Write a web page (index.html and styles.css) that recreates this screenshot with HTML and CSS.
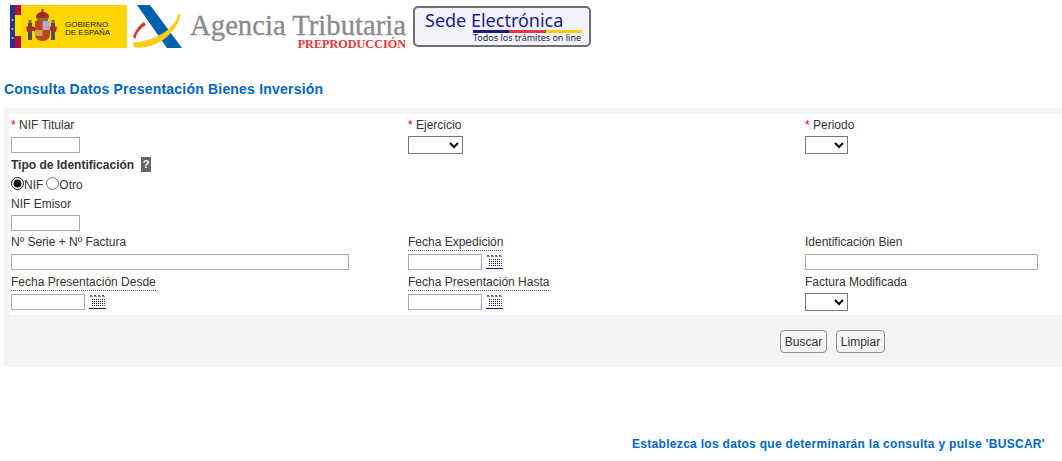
FILE: index.html
```html
<!DOCTYPE html>
<html lang="es">
<head>
  <meta charset="UTF-8">
  <meta name="viewport" content="width=device-width, initial-scale=1.0">
  <title>Consulta Datos Presentación Bienes Inversión</title>
  <link rel="stylesheet" href="styles.css">
</head>
<body>
  <svg width="0" height="0" class="defs">
    <defs>
      <g id="cal">
        <path d="M1 0.500h16" stroke="#55558c" stroke-dasharray="2 2"/>
        <path d="M1 1.500h16" stroke="#8a8aa8" stroke-dasharray="3 1"/>
        <path d="M3 4.500h11M3 6.500h11M3 8.500h11M3 10.500h11" stroke="#111" stroke-dasharray="1 1"/>
        <path d="M15.500 4v8" stroke="#c2185b" stroke-dasharray="1 1"/>
        <path d="M0 13.500h17" stroke="#14147a"/>
      </g>
    </defs>
  </svg>

  <header class="top">
    <svg class="logo-gob" width="117" height="43" viewBox="0 0 117 43">
      <rect width="117" height="43" fill="#ffd500"/>
      <rect width="5" height="43" fill="#2b2f8f"/>
      <rect x="5" width="6" height="43" fill="#b5123a"/>
      <rect x="5" y="10" width="6" height="21" fill="#ffe600"/>
      <circle cx="2.500" cy="15" r="1" fill="#ffd500"/>
      <circle cx="2.500" cy="24" r="1" fill="#ffd500"/>
      <circle cx="2.500" cy="33" r="1" fill="#ffd500"/>
      <path d="M18 18h4v17h-4zM41 18h4v17h-4z" fill="#4d5058"/>
      <path d="M18.500 15h3v3h-3zM41.500 15h3v3h-3z" fill="#8a6d1f"/>
      <path d="M16 22c4-2 7-1 10 1v4c-3-2-6-2-9 0zM47 22c-4-2-7-1-10 1v4c3-2 6-2 9 0z" fill="#b02a2a"/>
      <path d="M25 16h15v13c0 5-4 7-7.500 7s-7.500-2-7.500-7z" fill="#b8471f"/>
      <path d="M32.500 16h7.500v9h-7.500z" fill="#b9a6c4"/>
      <path d="M25 25h7.500v6h-7.500z" fill="#d2a24a"/>
      <path d="M26 12c0-3 3-5 6.500-5s6.500 2 6.500 5l-1 2H27z" fill="#a8282a"/>
      <path d="M27 13h11v3H27z" fill="#8a6d1f"/>
      <rect x="31.500" y="4" width="2" height="4" fill="#6b4a1a"/>
      <text x="55" y="22" class="gob-text">GOBIERNO</text>
      <text x="55" y="30" class="gob-text">DE ESPAÑA</text>
    </svg>

    <svg class="logo-aeat" width="51" height="43" viewBox="-1 0 51 43">
      <path d="M3 0h13l32 43H33z" fill="#0060ae"/>
      <path d="M45 9c-3 13-20 27-46 29l2 4c21 2 41-13 45-32z" fill="#ffcc1a" stroke="#ffcc1a"/>
      <path d="M10 17c-5 3-9 9-11 15l2.500 2c1-6 5-11 10.500-14z" fill="#d9383a"/>
    </svg>

    <div class="agencia">
      <span class="agencia-name">Agencia Tributaria</span>
      <span class="agencia-env">PREPRODUCCIÓN</span>
    </div>

    <div class="sede">
      <div class="sede-title">Sede <span class="sede-strong">Electrónica</span></div>
      <div class="sede-bar"><i class="b1"></i><i class="b2"></i><i class="b3"></i></div>
      <div class="sede-sub">Todos los trámites on line</div>
    </div>
  </header>

  <h1 class="page-title">Consulta Datos Presentación Bienes Inversión</h1>

  <form class="panel">
    <div class="fields">
      <div class="row">
        <div class="field">
          <label><span class="req">*</span> NIF Titular</label>
          <input type="text" class="w-nif">
        </div>
        <div class="field">
          <label><span class="req">*</span> Ejercicio</label>
          <select class="w-eje"><option></option></select>
        </div>
        <div class="field">
          <label><span class="req">*</span> Periodo</label>
          <select class="w-per"><option></option></select>
        </div>
      </div>

      <div class="tipo">
        <div class="tipo-label"><b>Tipo de Identificación</b><span class="help">?</span></div>
        <div class="radios">
          <input type="radio" name="tipo" checked><span>NIF</span>
          <input type="radio" name="tipo"><span>Otro</span>
        </div>
        <label class="emisor-label">NIF Emisor</label>
        <input type="text" class="w-nif">
      </div>

      <div class="row row-serie">
        <div class="field">
          <label>Nº Serie + Nº Factura</label>
          <input type="text" class="w-serie">
        </div>
        <div class="field">
          <label><span class="dotted">Fecha Expedición</span></label>
          <div class="date"><input type="text" class="w-date"><svg width="17" height="14"><use href="#cal"/></svg></div>
        </div>
        <div class="field">
          <label>Identificación Bien</label>
          <input type="text" class="w-bien">
        </div>
      </div>

      <div class="row row-pres">
        <div class="field">
          <label><span class="dotted">Fecha Presentación Desde</span></label>
          <div class="date"><input type="text" class="w-date"><svg width="17" height="14"><use href="#cal"/></svg></div>
        </div>
        <div class="field">
          <label><span class="dotted">Fecha Presentación Hasta</span></label>
          <div class="date"><input type="text" class="w-date"><svg width="17" height="14"><use href="#cal"/></svg></div>
        </div>
        <div class="field">
          <label>Factura Modificada</label>
          <select class="w-per"><option></option></select>
        </div>
      </div>
    </div>

    <div class="actions">
      <button type="button" class="btn">Buscar</button>
      <button type="button" class="btn">Limpiar</button>
    </div>
  </form>

  <p class="hint">Establezca los datos que determinarán la consulta y pulse 'BUSCAR'</p>
</body>
</html>
```

FILE: styles.css
```css
* {
  box-sizing: border-box;
}

body {
  margin: 0;
  font-family: "Liberation Sans", Arial, sans-serif;
  font-size: 12px;
  color: #333;
  overflow: hidden;
}

.defs {
  position: absolute;
}

/* cabecera */
.top {
  display: flex;
  align-items: flex-start;
  height: 48px;
  padding: 5px 0 0 10px;
}

.logo-gob {
  flex: none;
}

.logo-aeat {
  flex: none;
  margin-left: 6px;
}

.gob-text {
  font-family: "Liberation Sans", Arial, sans-serif;
  font-size: 8px;
  fill: #222;
}

.agencia {
  display: flex;
  flex-direction: column;
  align-items: flex-end;
  width: 216px;
  margin-left: 6px;
  font-family: "Liberation Serif", "Times New Roman", serif;
}

.agencia-name {
  font-size: 28.700px;
  line-height: 28px;
  margin-top: 6px;
  color: #8a8a8a;
  white-space: nowrap;
  -webkit-text-stroke: 0.3px #8a8a8a;
}

.agencia-env {
  font-size: 12.200px;
  font-weight: bold;
  line-height: 10px;
  color: #e8383a;
}

.sede {
  width: 178px;
  height: 41px;
  margin: 1px 0 0 7px;
  padding: 2px 0 0 10px;
  border: 2px solid #6f6f6f;
  border-radius: 5px;
  background: #f3f3fd;
  font-family: "Noto Sans", "Open Sans", sans-serif;
  color: #1a1a8c;
}

.sede-title {
  font-size: 18px;
  line-height: 20px;
  white-space: nowrap;
}

.sede-strong {
  color: #1a1a8c;
}

.sede-bar {
  display: flex;
  width: 109px;
  height: 3px;
  margin-left: 48px;
}

.sede-bar i {
  flex: 1;
}

.b1 { background: #1a1a8c; }
.b2 { background: #e0383e; }
.b3 { background: #ffcc1a; }

.sede-sub {
  margin-left: 48px;
  font-size: 9px;
  line-height: 10px;
  color: #22224f;
  white-space: nowrap;
}

.page-title {
  margin: 33px 0 0 4px;
  font-size: 14px;
  line-height: 16px;
  letter-spacing: 0.2px;
  color: #0066cc;
  font-weight: bold;
}

/* formulario */
.panel {
  margin: 11px 0 0 4px;
  padding-top: 6px;
  background: #f4f4f4;
  border-radius: 4px 0 0 4px;
}

.fields {
  margin-left: 5px;
  padding: 4px 0 4px 2px;
  background: #fff;
}

.row {
  display: grid;
  grid-template-columns: 397px 397px 1fr;
}

.field label,
.emisor-label,
.tipo-label {
  display: block;
  line-height: 14px;
}

.field label {
  margin-bottom: 5px;
}

.req {
  color: #e00000;
}

.dotted {
  border-bottom: 1px dotted #555;
  padding-bottom: 1px;
}

input[type="text"] {
  display: block;
  height: 16px;
  margin: 0;
  padding: 0 2px;
  border: 1px solid #aaa;
  border-radius: 0;
  background: #fff;
}

select {
  display: block;
  height: 18px;
  margin: -1px 0 0;
  font-size: 12px;
  border: 1px solid #767676;
  border-radius: 0;
  background: #fff;
}

.w-nif { width: 69px; }
.w-date { width: 74px; }
.w-serie { width: 338px; }
.w-bien { width: 233px; }
.w-eje { width: 55px; }
.w-per { width: 43px; }

.date {
  display: flex;
  align-items: center;
  gap: 4px;
}

.tipo {
  margin-top: 3px;
}

.tipo-label {
  display: flex;
  align-items: center;
}

.help {
  width: 10px;
  height: 15px;
  margin-left: 7px;
  background: #666;
  color: #fff;
  font-weight: bold;
  font-size: 11px;
  line-height: 15px;
  text-align: center;
}

.radios {
  display: flex;
  align-items: center;
  height: 22px;
}

.radios input {
  width: 13px;
  height: 13px;
  margin: 0;
  accent-color: #111;
}

.radios span {
  margin-top: 3px;
}

.radios span + input {
  margin-left: 3px;
}

.emisor-label {
  margin: 3px 0 4px;
}

.row-serie {
  margin-top: 4px;
}

.row-pres {
  margin-top: 5px;
}

.actions {
  display: flex;
  gap: 9px;
  height: 52px;
  padding: 15px 0 0 776px;
}

.btn {
  width: 47px;
  height: 23px;
  padding: 0;
  font-family: inherit;
  font-size: 12px;
  color: #333;
  background: #f4f4f4;
  border: 1px solid #8f8f8f;
  border-radius: 4px;
}

.btn + .btn {
  width: 49px;
}

.hint {
  margin: 70px 17px 0 0;
  text-align: right;
  font-weight: bold;
  font-size: 12px;
  line-height: 14px;
  letter-spacing: 0.3px;
  color: #0066cc;
}
```
